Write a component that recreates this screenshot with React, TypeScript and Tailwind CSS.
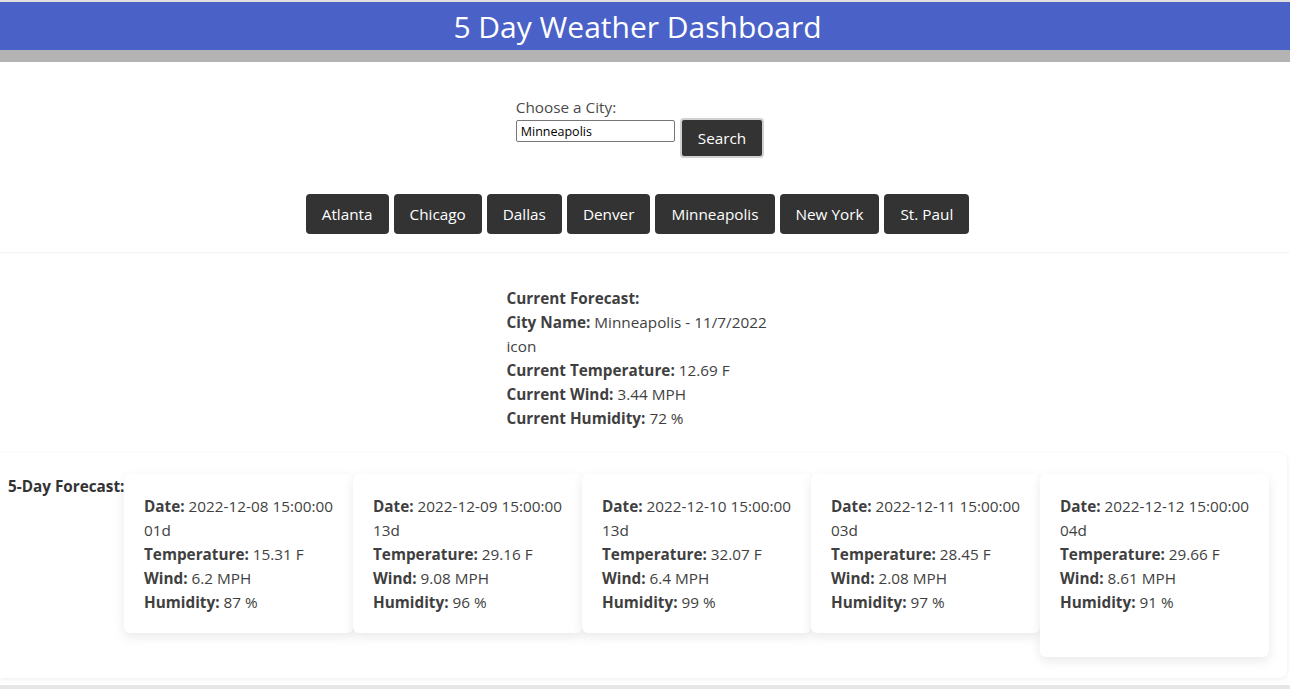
import React from 'react'

const font = { fontFamily: '"Open Sans", "Noto Sans", Arial, sans-serif' }

const cities = ['Atlanta', 'Chicago', 'Dallas', 'Denver', 'Minneapolis', 'New York', 'St. Paul']

const forecast = [
  { date: '2022-12-08 15:00:00', icon: '01d', temp: '15.31', wind: '6.2', hum: '87' },
  { date: '2022-12-09 15:00:00', icon: '13d', temp: '29.16', wind: '9.08', hum: '96' },
  { date: '2022-12-10 15:00:00', icon: '13d', temp: '32.07', wind: '6.4', hum: '99' },
  { date: '2022-12-11 15:00:00', icon: '03d', temp: '28.45', wind: '2.08', hum: '97' },
  { date: '2022-12-12 15:00:00', icon: '04d', temp: '29.66', wind: '8.61', hum: '91' },
]

function Line({ label, value }: { label?: string; value: string }) {
  return (
    <div className="h-6 leading-6 whitespace-nowrap">
      {label && <b className="font-bold">{label}</b>}
      {label ? ' ' : ''}
      {value}
    </div>
  )
}

export default function App() {
  return (
    <div className="min-h-[689px] bg-white text-[15.3px] text-[#3f3f3f]" style={font}>
      {/* header */}
      <header className="border-t-2 border-[#e0e0e0]">
        <div className="h-[48px] bg-[#4a61c8] pr-[15px] text-center text-[30px] leading-[50px] text-white">
          5 Day Weather Dashboard
        </div>
        <div className="h-[12px] bg-[#b3b3b3]" />
      </header>

      {/* search */}
      <section className="pt-[33px] pb-[18px] shadow-[0_1px_2px_rgba(0,0,0,0.06)]">
        <div className="flex justify-center pr-[10px]">
          <div className="flex flex-col">
            <label className="h-[25px] leading-6 text-[#4a4a4a]">Choose a City:</label>
            <input
              defaultValue="Minneapolis"
              className="h-[22px] w-[159px] rounded-[2px] border border-[#767676] px-1 text-[12.5px] text-black outline-none"
            />
          </div>
          <button className="ml-[5px] mt-[23px] h-10 rounded-[4px] border-2 border-[#d0d0d0] bg-[#333333] px-[16px] text-white">
            Search
          </button>
        </div>
        <div className="mt-[36px] flex justify-center gap-[5px] pr-[15px]">
          {cities.map((c) => (
            <button key={c} className="h-10 rounded-[4px] bg-[#333333] px-[16px] text-white">
              {c}
            </button>
          ))}
        </div>
      </section>

      {/* current forecast */}
      <section className="mt-[2px] pt-[32px] pb-[22px]">
        <div className="flex justify-center pr-[15px]">
          <div className="w-[262px]">
            <Line label="Current Forecast:" value="" />
            <Line label="City Name:" value="Minneapolis - 11/7/2022" />
            <Line value="icon" />
            <Line label="Current Temperature:" value="12.69 F" />
            <Line label="Current Wind:" value="3.44 MPH" />
            <Line label="Current Humidity:" value="72 %" />
          </div>
        </div>
      </section>

      {/* 5 day */}
      <section className="mr-[3px] mt-px flex items-start rounded-r-lg py-[21px] shadow-[0_1px_4px_rgba(0,0,0,0.08)]">
        <div className="w-[124px] shrink-0 whitespace-nowrap pl-2 leading-6 font-bold text-[#333]">5-Day Forecast:</div>
        <div className="flex items-start">
          {forecast.map((f, i) => (
            <div
              key={f.date}
              className="w-[229px] shrink-0 rounded-md bg-white px-5 pt-5 pb-[19px] shadow-[0_4px_12px_rgba(0,0,0,0.09)]"
            >
              <Line label="Date:" value={f.date} />
              <Line value={f.icon} />
              <Line label="Temperature:" value={`${f.temp} F`} />
              <Line label="Wind:" value={`${f.wind} MPH`} />
              <Line label="Humidity:" value={`${f.hum} %`} />
              {i === 4 && <div className="h-6" />}
            </div>
          ))}
        </div>
      </section>
      <div className="mt-[7px] h-[4px] bg-[#e6e6e6]" />
    </div>
  )
}
